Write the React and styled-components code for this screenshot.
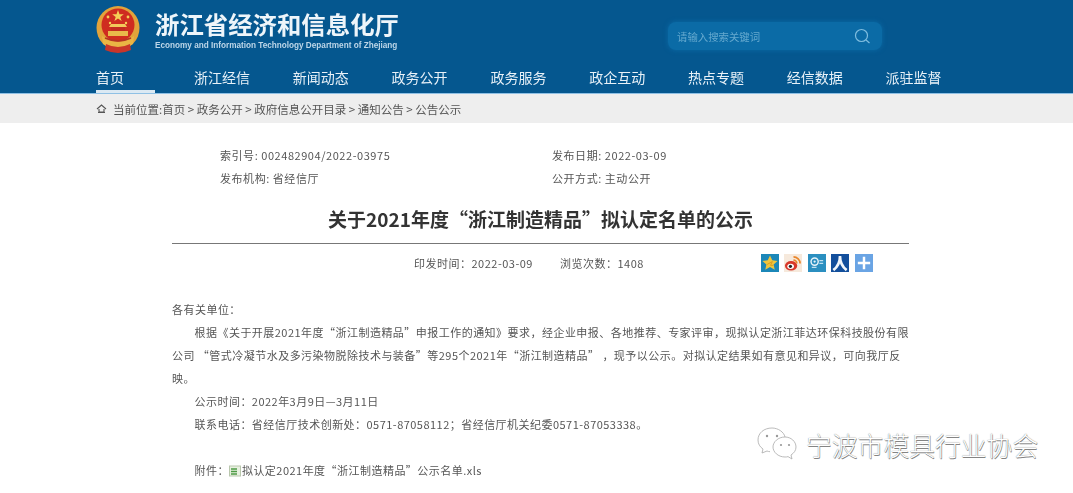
import React from "react";
import styled, { createGlobalStyle } from "styled-components";

const Global = createGlobalStyle`
  html, body { margin: 0; padding: 0; background: #fff; overflow: hidden; }
  body { font-family: "Noto Sans CJK SC", "Liberation Sans", sans-serif; }
`;
const Page = styled.div`
  position: relative; width: 1073px; height: 493px; overflow: hidden; background: #fff;
`;
const Header = styled.header`
  height: 93px; background: #05578f; border-bottom: 1.5px solid #8fc0e4; box-sizing: content-box;
  padding-left: 96px; display: flex; flex-direction: column;
`;
const TopRow = styled.div`
  height: 60px; display: flex; align-items: flex-start;
`;
const Emblem = styled.svg`
  width: 44px; height: 50px; margin-top: 5px; flex: none; filter: blur(0.4px);
`;
const Brand = styled.div`
  margin-left: 15px; margin-top: 9px; width: 513px; flex: none;
`;
const BrandName = styled.div`
  font-size: 24.4px; line-height: 30px; font-weight: 700; color: #eef5fa; white-space: nowrap;
  filter: blur(0.35px);
`;
const BrandEn = styled.div`
  font-family: "Liberation Sans", sans-serif;
  font-size: 8.2px; line-height: 11px; font-weight: 700; color: #bdd6e8; margin-top: 1px; white-space: nowrap; filter: blur(0.3px);
`;
const Search = styled.div`
  margin-top: 22px; width: 214px; height: 28px; border-radius: 8px; background: #0b6ba6;
  display: flex; align-items: center; justify-content: space-between; padding: 0 11px 0 9px; box-sizing: border-box;
  box-shadow: 0 0 5px #0b6ba6; filter: blur(0.3px);
`;
const Placeholder = styled.span`
  font-size: 10.4px; color: #65a9cf; filter: blur(0.4px); white-space: nowrap;
`;
const Nav = styled.nav`
  height: 33px; display: flex; align-items: flex-start;
`;
const NavItem = styled.a`
  width: 98.8px; flex: none; box-sizing: border-box; height: 33px; line-height: 34px;
  font-size: 14px; color: #e8f1f8; white-space: nowrap; filter: blur(0.25px);
  &:first-child { width: 98px; }
`;
const ActiveMark = styled.span`
  display: block; width: 59px; height: 3px; background: #dbe9f3; margin-top: -4px;
`;
const Crumbs = styled.div`
  height: 29px; background: #eeeeee; display: flex; align-items: center; padding-left: 96px;
  font-size: 11.5px; color: #555; gap: 6px; white-space: nowrap;
`;
const CrumbText = styled.span` filter: blur(0.3px); `;
const Main = styled.main`
  padding: 21px 164px 0 172px; color: #555;
`;
const Meta = styled.div`
  display: grid; grid-template-columns: 332px 1fr; padding-left: 48px;
  font-size: 11px; letter-spacing: 0.55px; line-height: 23px; filter: blur(0.3px);
`;
const MetaCell = styled.div` white-space: nowrap; `;
const Title = styled.h1`
  margin: 16px 0 0; height: 37px; line-height: 26px; text-align: center; font-size: 19px; font-weight: 700;
  color: #333; width: 737px; border-bottom: 1.5px solid #777; white-space: nowrap;
  filter: blur(0.25px);
`;
const InfoRow = styled.div`
  width: 737px; height: 38px; display: flex; align-items: center; font-size: 11px; padding-left: 242px; box-sizing: border-box;
  letter-spacing: 0.5px; white-space: nowrap;
`;
const InfoText = styled.span`
  margin-right: ${p => p.$gap}px; filter: blur(0.3px);
`;
const Share = styled.div`
  display: flex; gap: 5.5px; margin-left: 117px;
`;
const ShareIcon = styled.svg`
  width: 18px; height: 18px; display: block; filter: blur(0.35px);
`;
const Body = styled.div`
  margin-top: 16px; font-size: 11px; letter-spacing: 0.47px; line-height: 23px; filter: blur(0.3px);
`;
const Line = styled.p`
  margin: 0; white-space: nowrap; padding-left: ${p => (p.$indent ? 22.5 : 0)}px;
  margin-top: ${p => p.$mt || 0}px;
`;
const FileIcon = styled.svg`
  width: 12px; height: 12px; vertical-align: -2px; margin: 0 1px 0 0;
`;
const Watermark = styled.div`
  position: absolute; left: 757px; top: 427px; display: flex; align-items: center; gap: 8px;
`;
const WatermarkText = styled.span`
  font-size: 25.8px; line-height: 34px; color: #fff; white-space: nowrap; font-weight: 300;
  text-shadow: 0 0 1px #666, 0.5px 0.5px 0.5px #888;
`;

const navItems = ["首页", "浙江经信", "新闻动态", "政务公开", "政务服务", "政企互动", "热点专题", "经信数据", "派驻监督"];

export default function App() {
  return (
    <Page>
      <Global />
      <Header>
        <TopRow>
          <Emblem viewBox="0 0 44 50">
            <ellipse cx="22" cy="23" rx="21.500" ry="22" fill="#e2a33a" />
            <circle cx="22" cy="20" r="16.500" fill="#cf2c20" />
            <path d="M6 31 Q22 43 38 31 L37 39 Q22 49 7 39Z" fill="#eab544" />
            <path d="M10 39 Q22 45 34 39 L35 45 Q22 51 9 45Z" fill="#c9352a" />
            <path d="M12 26h20v5H12z" fill="#e9b84a" />
            <path d="M15 21h14v5H15z" fill="#c22a20" />
            <path d="M13 22l2-3h14l2 3z" fill="#f2c85a" />
            <path d="M9 33 Q22 39 35 33" fill="none" stroke="#b53324" strokeWidth="1.500" />
            <path d="M22 5l1.500 4.300h4.300l-3.500 2.600 1.300 4.200-3.600-2.600-3.600 2.600 1.300-4.200-3.500-2.600h4.300z" fill="#f5cf57" />
            <circle cx="12" cy="12" r="1.400" fill="#f5cf57" /><circle cx="32" cy="12" r="1.400" fill="#f5cf57" />
            <circle cx="14" cy="18" r="1.200" fill="#f5cf57" /><circle cx="30" cy="18" r="1.200" fill="#f5cf57" />
          </Emblem>
          <Brand>
            <BrandName>浙江省经济和信息化厅</BrandName>
            <BrandEn>Economy and Information Technology Department of Zhejiang</BrandEn>
          </Brand>
          <Search>
            <Placeholder>请输入搜索关键词</Placeholder>
            <svg width="17" height="17" viewBox="0 0 17 17" fill="none" stroke="#7fbddf" strokeWidth="1.200">
              <circle cx="7.500" cy="7.500" r="6" /><path d="M12 12l3.500 3" />
            </svg>
          </Search>
        </TopRow>
        <Nav>
          {navItems.map((n, i) => (
            <NavItem key={n}>{n}{i === 0 && <ActiveMark />}</NavItem>
          ))}
        </Nav>
      </Header>
      <Crumbs>
        <svg width="11" height="11" viewBox="0 0 11 11" fill="none" stroke="#555" strokeWidth="1.100">
          <path d="M1 6l4.500-4L10 6M3 6v3h5V6M2 9.500h7" />
        </svg>
        <CrumbText>当前位置:首页 &gt; 政务公开 &gt; 政府信息公开目录 &gt; 通知公告 &gt; 公告公示</CrumbText>
      </Crumbs>
      <Main>
        <Meta>
          <MetaCell>索引号: 002482904/2022-03975</MetaCell>
          <MetaCell>发布日期: 2022-03-09</MetaCell>
          <MetaCell>发布机构: 省经信厅</MetaCell>
          <MetaCell>公开方式: 主动公开</MetaCell>
        </Meta>
        <Title>关于2021年度“浙江制造精品”拟认定名单的公示</Title>
        <InfoRow>
          <InfoText $gap={27}>印发时间：2022-03-09</InfoText>
          <InfoText $gap={0}>浏览次数：1408</InfoText>
          <Share>
            <ShareIcon viewBox="0 0 19 19">
              <rect width="19" height="19" fill="#1b87b8" />
              <path d="M9.500 1.500l2.400 5.200 5.600.6-4.200 3.800 1.200 5.600-5-2.900-5 2.900 1.200-5.600L1.500 7.300l5.600-.6z" fill="#f0c53c" />
              <path d="M6.500 11l5.500-3-2 4h3" fill="none" stroke="#d99a20" strokeWidth="1" />
            </ShareIcon>
            <ShareIcon viewBox="0 0 19 19">
              <rect width="19" height="19" fill="#f6e9dc" />
              <ellipse cx="7.500" cy="12.500" rx="6.500" ry="5" fill="#d8372a" />
              <ellipse cx="7" cy="13" rx="3.500" ry="2.800" fill="#fff" />
              <circle cx="6.800" cy="13" r="1.700" fill="#222" />
              <path d="M10 3a7 7 0 0 1 7 7M10 6.500a3.500 3.500 0 0 1 3.500 3.500" fill="none" stroke="#e9862b" strokeWidth="1.800" />
            </ShareIcon>
            <ShareIcon viewBox="0 0 19 19">
              <rect width="19" height="19" fill="#2b8fc0" />
              <circle cx="7" cy="8" r="3.800" fill="none" stroke="#e8f4fa" strokeWidth="1.500" />
              <circle cx="7" cy="8" r="1.200" fill="#e8f4fa" />
              <path d="M12 7h4M12 10h4M4 14h5" stroke="#bfe0f0" strokeWidth="1.300" />
            </ShareIcon>
            <ShareIcon viewBox="0 0 19 19">
              <rect width="19" height="19" fill="#134f9c" />
              <path d="M9.500 2c0 6-2 11-7 15M9.500 2c0 6 2 11 7 15" fill="none" stroke="#f2f7fb" strokeWidth="2.800" />
            </ShareIcon>
            <ShareIcon viewBox="0 0 19 19">
              <rect width="19" height="19" fill="#6aa4e4" />
              <path d="M9.500 3v13M3 9.500h13" stroke="#fff" strokeWidth="2.600" />
            </ShareIcon>
          </Share>
        </InfoRow>
        <Body>
          <Line>各有关单位：</Line>
          <Line $indent>根据《关于开展2021年度“浙江制造精品”申报工作的通知》要求，经企业申报、各地推荐、专家评审，现拟认定浙江菲达环保科技股份有限</Line>
          <Line>公司 “管式冷凝节水及多污染物脱除技术与装备”等295个2021年“浙江制造精品” ，现予以公示。对拟认定结果如有意见和异议，可向我厅反</Line>
          <Line>映。</Line>
          <Line $indent>公示时间：2022年3月9日—3月11日</Line>
          <Line $indent>联系电话：省经信厅技术创新处：0571-87058112；省经信厅机关纪委0571-87053338。</Line>
          <Line $indent $mt={23}>
            附件：
            <FileIcon viewBox="0 0 12 12">
              <rect x="0.500" y="1" width="11" height="10" fill="#e8f0e0" stroke="#b9c7ad" />
              <path d="M2 4h6M2 6.500h6M2 9h6" stroke="#4d9a45" strokeWidth="1.400" />
            </FileIcon>
            拟认定2021年度“浙江制造精品”公示名单.xls
          </Line>
        </Body>
      </Main>
      <Watermark>
        <svg width="41" height="36" viewBox="0 0 41 36" fill="#fff" stroke="#aaa" strokeWidth="0.800">
          <path d="M15 1C7 1 1 6 1 13c0 4 2 7 5 9l-1 4 5-2c1 .4 2 .6 3 .7" />
          <path d="M15 1c6 0 12 4 13 9" fill="none" />
          <path d="M28 10c-7 0-12 5-12 10s5 10 12 10c1 0 2 0 3-.4l4 2.400-1-4c3-2 5-4.500 5-8 0-5.500-5-10-11-10z" />
          <circle cx="10" cy="9" r="1.200" fill="#999" stroke="none" /><circle cx="20" cy="9" r="1.200" fill="#999" stroke="none" />
          <circle cx="24" cy="18" r="1.100" fill="#999" stroke="none" /><circle cx="32" cy="18" r="1.100" fill="#999" stroke="none" />
        </svg>
        <WatermarkText>宁波市模具行业协会</WatermarkText>
      </Watermark>
    </Page>
  );
}
